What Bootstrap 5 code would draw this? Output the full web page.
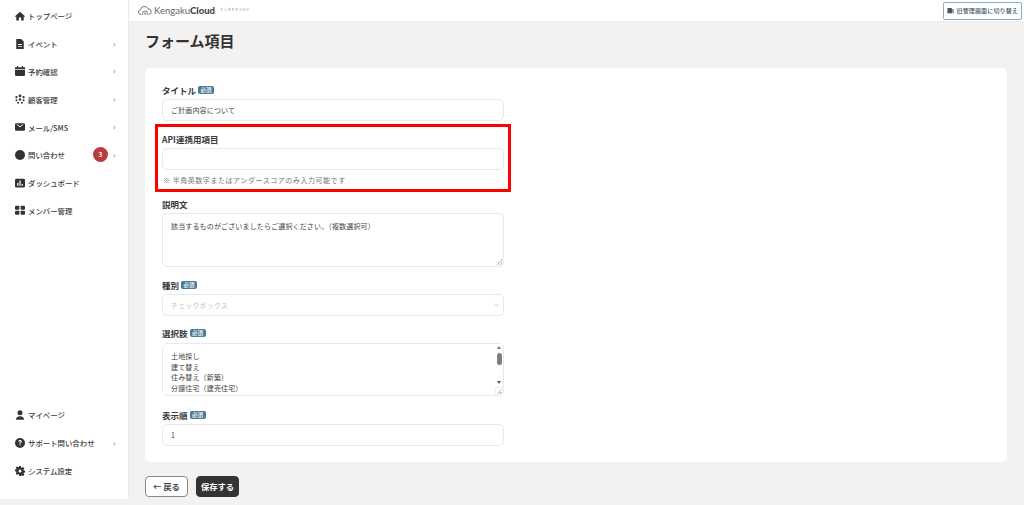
<!DOCTYPE html>
<html lang="ja"><head><meta charset="utf-8"><title>フォーム項目</title>
<link rel="stylesheet" href="https://cdn.jsdelivr.net/npm/bootstrap@5.3.0/dist/css/bootstrap.min.css">
<style>
html,body{height:505px;overflow:hidden}
body{background:#f3f2f0;font-family:"Noto Sans CJK JP","Noto Sans",sans-serif;color:#333;font-size:8px}
.shell{height:499px}
.sidebar{width:129px;background:#fff;border-right:1px solid #e9e8e6;flex:none;padding:2px 0 14px}
.navi{height:27.8px;padding:0 9px 0 14.500px;color:#3a3a3a;font-size:7.4px;font-weight:500;text-decoration:none}
.bottomnav .navi{height:28px}
.navi svg.ico{width:10px;height:10px;margin-right:3.500px;fill:#333;flex:none}
.chev{color:#888;font-size:8px;margin-left:auto;width:6px}
.count{width:15px;height:15px;border-radius:50%;background:#b83b3e;color:#fff;font-size:6.500px;font-weight:700;margin-left:auto;margin-right:5px}
.count + .chev{margin-left:0}
.mainarea{min-width:0;height:505px}
.topbar{height:22px;background:#fff;border-bottom:1px solid #ecebe9;padding:0 2px 0 9px}
.brand{font-family:Lato,sans-serif;font-size:9.500px;color:#666;margin-left:2px;line-height:1}
.brand b{color:#444;font-weight:900}
.kana{font-size:3.300px;color:#777;margin-left:5px;letter-spacing:.5px}
.switch{border:1px solid #8fa9bd;border-radius:2px;height:18px;padding:0 3px;font-size:6px;color:#3d566b;background:#fff;font-weight:500;letter-spacing:.15px}
.switch svg{width:7px;height:7px;fill:#3d566b;margin-right:2px}
.pagehead{font-size:15px;font-weight:700;color:#333;margin:0;padding:8px 0 0 16px;height:46px;line-height:22px}
.formcard{margin:0 17px 0 16px;background:#fff;border-radius:5px;height:394px;padding:0 17px;position:relative;width:862px}
.field-label{font-size:8.500px;font-weight:700;color:#3a3a3a;line-height:12px;margin:0;display:flex;align-items:center;height:12px}
.req{background:#4a7a96;color:#fff;font-size:5.500px;font-weight:500;padding:0 2.500px;border-radius:2px;margin-left:2px;line-height:8px;height:8px}
.formcard .form-control,.formcard .form-select{font-size:7px;color:#444;border:1px solid #e9e9e9;border-radius:5px;padding:0 8px;width:342px;letter-spacing:.15px;box-shadow:none;background-color:#fff}
.single{height:22px;margin-top:3px}
.formcard .form-select{color:#c4c4c4;opacity:1;background-image:url("data:image/svg+xml,%3csvg xmlns='http://www.w3.org/2000/svg' viewBox='0 0 16 16'%3e%3cpath fill='none' stroke='%23bbb' stroke-width='2' d='m2 5 6 6 6-6'/%3e%3c/svg%3e");background-size:7px 6px;background-position:right 3px center;height:22px;margin-top:3px}
.formcard textarea.form-control{padding-top:7px;line-height:10.500px}
.formcard textarea::-webkit-resizer{background:linear-gradient(135deg,transparent 50%,#bbb 50%,#bbb 60%,transparent 60%,transparent 75%,#bbb 75%,#bbb 85%,transparent 85%) right 1px bottom 1px/6px 6px no-repeat}
.hint{font-size:7px;color:#777;margin:5px 0 0 1px;line-height:11px;letter-spacing:.55px}
.redbox{position:absolute;left:10px;top:56px;width:356px;height:68px;border:3px solid #f00;pointer-events:none}
.backbtn,.savebtn{height:21px;font-size:8.300px;font-weight:700;padding:0;border-radius:4px;width:43px;line-height:19px}
.backbtn{border:1px solid #888;background:#fff;color:#444}
.savebtn{border:1px solid #333;background:#333;color:#fff}
.actions{margin:14px 0 0 16px}
.gapa{margin-top:12px}
.choices{width:342px;margin-top:4px}
.fakebar{position:absolute;top:1px;right:1px;width:8px;height:43px;background:#fff;border-top-right-radius:5px;pointer-events:none}
.arrup,.arrdn{position:absolute;left:1.500px;width:0;height:0;border-left:2.500px solid transparent;border-right:2.500px solid transparent}
.arrup{top:2px;border-bottom:3px solid #777}
.arrdn{bottom:3px;border-top:3px solid #555}
.thumb{position:absolute;left:1.500px;top:9px;width:5px;height:12px;border-radius:2.500px;background:#7f7f7f}
.corner{position:absolute;right:1px;bottom:1px;width:8px;height:8px;border-left:1px solid #eee;border-top:1px solid #eee;pointer-events:none}
</style></head><body>
<div class="d-flex shell">
<nav class="sidebar d-flex flex-column justify-content-between">
<div>
<a class="navi d-flex align-items-center" href="#"><svg class="ico" viewBox="0 0 16 16"><path d="M8 1 0 8.300l1.200 1.200L2 8.800V15h4.200v-4.500h3.600V15H14V8.800l.8.7L16 8.300z"/></svg>トップページ</a>
<a class="navi d-flex align-items-center" href="#"><svg class="ico" viewBox="0 0 16 16"><path d="M2 0h8l4 4v12H2zm3 8v1.500h6V8zm0 3v1.500h6V11z" fill-rule="evenodd"/></svg>イベント<span class="chev">›</span></a>
<a class="navi d-flex align-items-center" href="#"><svg class="ico" viewBox="0 0 16 16"><path d="M3 0h2v2h6V0h2v2h3v3H0V2h3zM0 6.500h16V14a2 2 0 0 1-2 2H2a2 2 0 0 1-2-2z"/></svg>予約確認<span class="chev">›</span></a>
<a class="navi d-flex align-items-center" href="#"><svg class="ico" viewBox="0 0 16 16"><circle cx="8" cy="3" r="2.200"/><circle cx="2.300" cy="5" r="1.800"/><circle cx="13.700" cy="5" r="1.800"/><circle cx="8" cy="8.600" r="2"/><circle cx="2.300" cy="10" r="1.600"/><circle cx="13.700" cy="10" r="1.600"/><circle cx="5" cy="14" r="1.600"/><circle cx="11" cy="14" r="1.600"/></svg>顧客管理<span class="chev">›</span></a>
<a class="navi d-flex align-items-center" href="#"><svg class="ico" viewBox="0 0 16 16"><path d="M2 2h12a2 2 0 0 1 2 2v8a2 2 0 0 1-2 2H2a2 2 0 0 1-2-2V4a2 2 0 0 1 2-2zm.5 2.500L8 8.500l5.500-4-.8-1L8 6.800 3.300 3.500z" fill-rule="evenodd"/></svg>メール/SMS<span class="chev">›</span></a>
<a class="navi d-flex align-items-center" href="#"><svg class="ico" viewBox="0 0 16 16"><circle cx="8" cy="8" r="8"/></svg>問い合わせ<span class="count d-flex align-items-center justify-content-center">3</span><span class="chev">›</span></a>
<a class="navi d-flex align-items-center" href="#"><svg class="ico" viewBox="0 0 16 16"><path d="M2 1h12a2 2 0 0 1 2 2v10a2 2 0 0 1-2 2H2a2 2 0 0 1-2-2V3a2 2 0 0 1 2-2zm1.500 7v4.500h2V8zm3.500-4v8.500h2V4zm3.500 5.500v3h2v-3z" fill-rule="evenodd"/></svg>ダッシュボード</a>
<a class="navi d-flex align-items-center" href="#"><svg class="ico" viewBox="0 0 16 16"><rect x="0" y="1" width="7" height="6.500" rx="1.500"/><rect x="9" y="1" width="7" height="6.500" rx="1.500"/><rect x="0" y="9" width="7" height="6.500" rx="1.500"/><rect x="9" y="9" width="7" height="6.500" rx="1.500"/></svg>メンバー管理</a>
</div>
<div class="bottomnav">
<a class="navi d-flex align-items-center" href="#"><svg class="ico" viewBox="0 0 16 16"><circle cx="8" cy="4.500" r="4"/><path d="M1.500 15.500c0-3.500 2.500-5.500 6.500-5.500s6.500 2 6.500 5.500z"/></svg>マイページ</a>
<a class="navi d-flex align-items-center" href="#"><svg class="ico" viewBox="0 0 16 16"><path d="M8 0a8 8 0 1 1 0 16A8 8 0 0 1 8 0zM5.200 6h1.800c0-.7.400-1.200 1-1.200s1 .4 1 1c0 .5-.3.800-.9 1.200C7.300 7.600 7 8.200 7 9.200h1.800c0-.6.200-.9.800-1.300.8-.5 1.300-1.200 1.300-2.200C10.900 4.200 9.700 3.200 8 3.200 6.300 3.200 5.200 4.300 5.200 6zM7 10.200V12h1.900v-1.800z" fill-rule="evenodd"/></svg>サポート問い合わせ<span class="chev">›</span></a>
<a class="navi d-flex align-items-center" href="#"><svg class="ico" viewBox="0 0 16 16"><path d="M6.500 0h3l.4 2.300 1.300.6 2-1.300 2.100 2.100-1.300 2 .6 1.300 2.300.4v3l-2.300.4-.6 1.300 1.300 2-2.100 2.100-2-1.300-1.300.6L9.500 16h-3l-.4-2.500-1.300-.6-2 1.300L.7 12.100l1.300-2-.6-1.300L-.900 8.500v-3l2.300-.4.600-1.300-1.300-2L2.800 .7l2 1.300 1.300-.6zM8 5.500a2.500 2.500 0 1 0 0 5 2.500 2.500 0 0 0 0-5z" fill-rule="evenodd" transform="translate(.5 0) scale(.94 1)"/></svg>システム設定</a>
</div>
</nav>
<main class="mainarea flex-grow-1">
<header class="topbar d-flex align-items-center justify-content-between">
<div class="d-flex align-items-center">
<svg width="14" height="11" viewBox="0 0 28 20" fill="none" stroke="#666" stroke-width="1.800"><path d="M7 18H6a5 5 0 0 1-1-9.900A8 8 0 0 1 20 6.500a5.800 5.800 0 0 1 1.500 11.500H21"/><path d="M9 18v-2a5 5 0 0 1 10 0v2M12.500 18v-1.500a1.500 1.500 0 0 1 3 0V18"/></svg>
<span class="brand">Kengaku<b>Cloud</b></span><span class="kana">ケンガククラウド</span>
</div>
<button class="switch d-flex align-items-center" type="button"><svg viewBox="0 0 16 16"><path d="M1 2h9l2 3v9H1zm12 2 2 1v9h-2z"/></svg>旧管理画面に切り替え</button>
</header>
<h1 class="pagehead">フォーム項目</h1>
<section class="formcard">
<div style="height:16px"></div>
<label class="field-label">タイトル<span class="req">必須</span></label>
<input class="form-control single" value="ご計画内容について">
<label class="field-label gapa">API連携用項目</label>
<input class="form-control single">
<p class="hint">※ 半角英数字またはアンダースコアのみ入力可能です</p>
<label class="field-label gapa">説明文</label>
<textarea class="form-control" style="height:54px;margin-top:3px">該当するものがございましたらご選択ください。（複数選択可）</textarea>
<label class="field-label gapa">種別<span class="req">必須</span></label>
<select class="form-select" disabled><option>チェックボックス</option></select>
<label class="field-label" style="margin-top:11px">選択肢<span class="req">必須</span></label>
<div class="choices position-relative">
<textarea class="form-control" style="height:53px">土地探し
建て替え
住み替え（新築）
分譲住宅（建売住宅）
二世帯住宅
リフォーム</textarea>
<div class="fakebar"><span class="arrup"></span><span class="thumb"></span><span class="arrdn"></span></div>
<div class="corner"></div>
</div>
<label class="field-label" style="margin-top:13px">表示順<span class="req">必須</span></label>
<input class="form-control single" value="1">
<div class="redbox"></div>
</section>
<div class="actions d-flex gap-2">
<button class="btn backbtn" type="button">← 戻る</button>
<button class="btn savebtn" type="button">保存する</button>
</div>
</main>
</div>
<script src="https://cdn.jsdelivr.net/npm/bootstrap@5.3.0/dist/js/bootstrap.bundle.min.js"></script>
</body></html>
